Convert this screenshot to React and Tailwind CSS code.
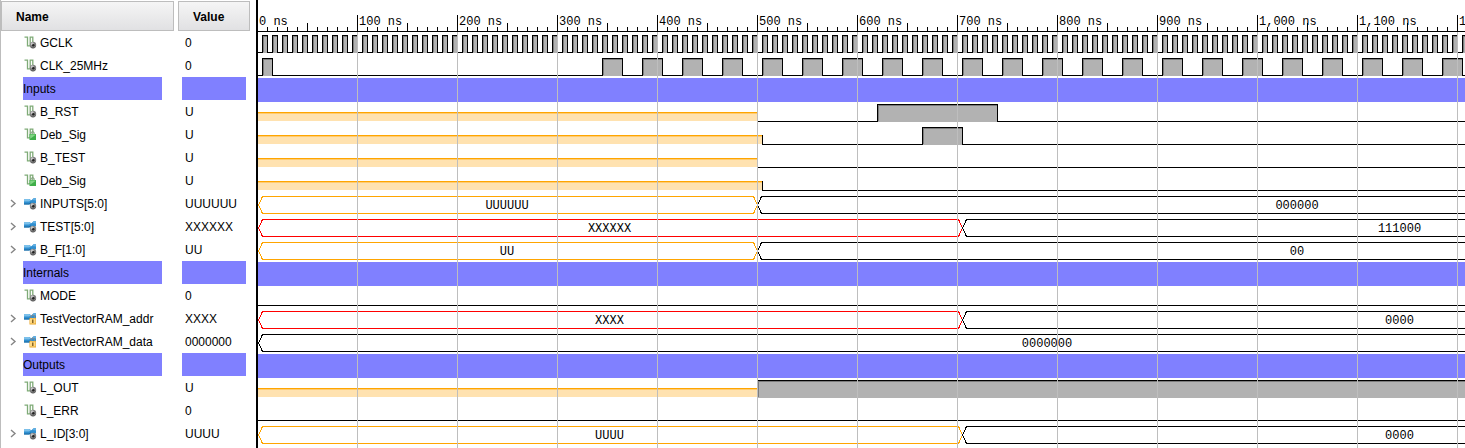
import React, { useLayoutEffect, useRef, useState } from "react";

const END = 1580;
const ROW = 23;
const TOP = 32;

const clock25 = [{ v: "0", t: 0 }, { v: "1", t: 5 }, { v: "0", t: 15 }];
for (let t = 345; t < END; t += 40) {
  clock25.push({ v: "1", t }, { v: "0", t: t + 20 });
}
const gclk = [];
for (let t = 0; t < END; t += 10) {
  gclk.push({ v: "0", t }, { v: "1", t: t + 5 });
}

const signals = [
  { name: "GCLK", value: "0", icon: "port", wave: gclk },
  { name: "CLK_25MHz", value: "0", icon: "port", wave: clock25 },
  { name: "Inputs", divider: true },
  { name: "B_RST", value: "U", icon: "port", wave: [{ v: "U", t: 0 }, { v: "0", t: 500 }, { v: "1", t: 620 }, { v: "0", t: 740 }] },
  { name: "Deb_Sig", value: "U", icon: "internal", wave: [{ v: "U", t: 0 }, { v: "0", t: 505 }, { v: "1", t: 665 }, { v: "0", t: 705 }] },
  { name: "B_TEST", value: "U", icon: "port", wave: [{ v: "U", t: 0 }, { v: "0", t: 500 }] },
  { name: "Deb_Sig", value: "U", icon: "internal", wave: [{ v: "U", t: 0 }, { v: "0", t: 505 }] },
  { name: "INPUTS[5:0]", value: "UUUUUU", icon: "bus", bus: [{ v: "UUUUUU", t: 0 }, { v: "000000", t: 500 }] },
  { name: "TEST[5:0]", value: "XXXXXX", icon: "bus", bus: [{ v: "XXXXXX", t: 0 }, { v: "111000", t: 705 }] },
  { name: "B_F[1:0]", value: "UU", icon: "bus", bus: [{ v: "UU", t: 0 }, { v: "00", t: 500 }] },
  { name: "Internals", divider: true },
  { name: "MODE", value: "0", icon: "port", wave: [{ v: "0", t: 0 }] },
  { name: "TestVectorRAM_addr", value: "XXXX", icon: "locked", bus: [{ v: "XXXX", t: 0 }, { v: "0000", t: 705 }] },
  { name: "TestVectorRAM_data", value: "0000000", icon: "locked", bus: [{ v: "0000000", t: 0 }] },
  { name: "Outputs", divider: true },
  { name: "L_OUT", value: "U", icon: "port", wave: [{ v: "U", t: 0 }, { v: "1", t: 500 }] },
  { name: "L_ERR", value: "0", icon: "port", wave: [{ v: "0", t: 0 }] },
  { name: "L_ID[3:0]", value: "UUUU", icon: "bus", bus: [{ v: "UUUU", t: 0 }, { v: "0000", t: 705 }] },
];

function Knob() {
  return (
    <g>
      <circle cx="9" cy="9" r="3.2" fill="#808080" />
      <circle cx="8.2" cy="7.8" r="1.5" fill="#c4c4c4" />
      <circle cx="9.3" cy="9.2" r="1.2" fill="#222" />
      <path d="M6.6 11a3.2 3.2 0 0 0 5-.4" fill="none" stroke="#4a4a4a" strokeWidth="0.8" />
    </g>
  );
}

function SignalIcon({ kind }) {
  const scalar = kind === "port" || kind === "internal";
  return (
    <svg width="13" height="13" viewBox="0 0 13 13" className="shrink-0" aria-hidden="true">
      {scalar ? (
        <path d="M0.5 1.2H3.5V9.8H6.2V1.2H8.8V6" fill="none" stroke="#7fab77" strokeWidth="1.3" />
      ) : (
        <g>
          <path d="M0 2H5L7.5 3.2L9.5 1.2H12V6.5H8L6 7.4H0Z" fill="#2f8fd0" />
          <path d="M0 2H5L7 3.4L5 4.6H0Z" fill="#7cc0ea" />
          <path d="M8 3L10 1.2H12V3.6Z" fill="#62afe2" />
          <path d="M0 7H5L7 5.8" fill="none" stroke="#176299" strokeWidth="0.9" />
        </g>
      )}
      {(kind === "port" || kind === "bus") && <Knob />}
      {kind === "internal" && (
        <g>
          <path d="M7 6V5.2a1.6 1.6 0 0 1 3.2 0V6" fill="none" stroke="#7d9c79" />
          <rect x="5.5" y="6" width="6.5" height="6" fill="#3fae49" />
          <path d="M6.2 10.8L11.4 7V6.6H6.2Z" fill="#83d585" />
        </g>
      )}
      {kind === "locked" && (
        <g>
          <path d="M6.9 6.2V5a1.9 1.9 0 0 1 3.8 0V6.2" fill="none" stroke="#8c8c8c" />
          <rect x="5.5" y="6" width="6.5" height="6.5" fill="#e9a72c" />
          <rect x="6" y="6.5" width="5.5" height="5" fill="#ffd982" />
          <rect x="8.2" y="7.5" width="1.2" height="3.5" fill="#6b4a10" />
        </g>
      )}
    </svg>
  );
}

function SignalTable() {
  return (
    <table className="w-full table-fixed border-collapse text-left text-xs text-black">
      <colgroup>
        <col className="w-[177px]" />
        <col />
      </colgroup>
      <thead>
        <tr className="h-[31px]">
          <th className="p-0">
            <div className="mt-px mr-1 flex h-[30px] items-center border border-[#bdbdbd] bg-linear-to-b from-[#f5f5f5] to-[#e1e1e3] pt-px pl-3.5">Name</div>
          </th>
          <th className="p-0">
            <div className="mt-px mr-1.5 flex h-[30px] items-center border border-[#bdbdbd] bg-linear-to-b from-[#f5f5f5] to-[#e1e1e3] pt-px pl-3.5">Value</div>
          </th>
        </tr>
      </thead>
      <tbody>
        {signals.map((s, i) =>
          s.divider ? (
            <tr key={i} className="h-[23px]">
              <td className="p-0">
                <div className="mr-4 ml-[22px] flex h-[23px] items-center bg-[#8080ff]">{s.name}</div>
              </td>
              <td className="p-0">
                <div className="mr-2.5 ml-1 h-[23px] bg-[#8080ff]" />
              </td>
            </tr>
          ) : (
            <tr key={i} className="h-[23px]">
              <td className="p-0">
                <div className="flex h-[23px] items-center">
                  <div className="flex w-[23px] shrink-0 items-center pl-2">
                    {s.bus && (
                      <button type="button" aria-label={"Expand " + s.name} className="flex">
                        <svg width="8" height="10" viewBox="0 0 8 10" aria-hidden="true">
                          <path d="M2 1L6 4.5L2 8" fill="none" stroke="#858585" strokeWidth="1.4" />
                        </svg>
                      </button>
                    )}
                  </div>
                  <SignalIcon kind={s.icon} />
                  <span className="pl-[3px] whitespace-nowrap">{s.name}</span>
                </div>
              </td>
              <td className="p-0">
                <div className="flex h-[23px] items-center pl-[7px]">{s.value}</div>
              </td>
            </tr>
          )
        )}
      </tbody>
    </table>
  );
}

// x = 0 of the drawing is one pixel after time zero.
const px = (t) => Math.max(t - 1, 0);

function Digital({ wave, y }) {
  return wave.map((seg, i) => {
    const a = px(seg.t);
    const b = (wave[i + 1] ? wave[i + 1].t : END) - 1;
    const prev = wave[i - 1];
    if (seg.v === "U") {
      return (
        <g key={i}>
          <rect x={a} y={y + 12} width={b - a} height="8" fill="#ffe2b0" />
          <rect x={a} y={y + 12} width={b - a} height="1" fill="#ffcb70" />
          <rect x={a} y={y + 11} width={b - a} height="1" fill="#ffa500" />
        </g>
      );
    }
    if (seg.v === "1") {
      return (
        <g key={i}>
          <rect x={a} y={y + 3} width={b - a} height="18" fill="#b2b2b2" />
          <rect x={a + 1} y={y + 4} width={b - a - 1} height="1" fill="#7c7c7c" />
          <rect x={a + 1} y={y + 4} width="1" height="16" fill="#7c7c7c" />
          <rect x={a} y={y + 3} width={b - a} height="1" fill="#000" />
          <rect x={a} y={y + 3} width="1" height="18" fill="#000" />
        </g>
      );
    }
    return (
      <g key={i}>
        <rect x={a} y={y + 20} width={b - a} height="1" fill="#000" />
        {prev && <rect x={a} y={prev.v === "U" ? y + 11 : y + 3} width="1" height={prev.v === "U" ? 10 : 18} fill="#000" />}
      </g>
    );
  });
}

function Bus({ bus, y }) {
  return bus.map((seg, i) => {
    const next = bus[i + 1];
    const a = px(seg.t) + 0.5;
    const b = (next ? next.t : END) - 0.5;
    const color = seg.v[0] === "U" ? "#ffa500" : seg.v[0] === "X" ? "#ff0000" : "#000";
    const mid = y + 12;
    return (
      <g key={i}>
        <path
          d={`M${a} ${mid}L${a + 4} ${y + 3.5}H${b - 4}L${b} ${mid}L${b - 4} ${y + 20.5}H${a + 4}Z`}
          fill="none"
          stroke={color}
          shapeRendering="crispEdges"
        />
        <text x={(seg.t + (next ? next.t : END)) / 2 - 1} y={y + 16} textAnchor="middle">
          {seg.v}
        </text>
      </g>
    );
  });
}

function Waveforms() {
  const ref = useRef(null);
  const [visible, setVisible] = useState(END);

  useLayoutEffect(() => {
    const measure = () => setVisible(Math.min(END, ref.current.getBoundingClientRect().width));
    measure();
    window.addEventListener("resize", measure);
    return () => window.removeEventListener("resize", measure);
  }, []);

  const ticks = [];
  for (let t = 0; t <= visible; t += 10) ticks.push(t);
  const majors = ticks.filter((t) => t % 100 === 0);
  const height = TOP + signals.length * ROW + 2;
  return (
    <svg
      ref={ref}
      width="100%"
      height={height}
      className="block [font-family:'Liberation_Mono','Courier_New',monospace] text-xs"
      role="img"
      aria-label="Waveforms"
    >
      {signals.map((s, i) => {
        const y = TOP + i * ROW;
        if (s.divider) return <rect key={i} x="0" y={y} width={END} height="24" fill="#8080ff" />;
        return s.bus ? <Bus key={i} bus={s.bus} y={y} /> : <Digital key={i} wave={s.wave} y={y} />;
      })}
      {majors.slice(1).map((t) => (
        <rect key={t} x={t - 1} y={TOP} width="1" height={height - TOP} fill="#bebebe" />
      ))}
      <rect x="0" y="31" width={END} height="1" fill="#000" />
      {ticks.slice(1).map((t) => {
        const h = t % 100 === 0 ? 17 : t % 50 === 0 ? 9 : 5;
        return <rect key={t} x={t - 1} y={TOP - h} width="1" height={h} fill="#000" />;
      })}
      {majors.map((t) => (
        <text key={t} x={t + 1} y="25">
          {`${t.toLocaleString("en-US")} ns`}
        </text>
      ))}
    </svg>
  );
}

export default function App() {
  return (
    <main className="flex min-h-screen overflow-hidden bg-white [font-family:'Liberation_Sans',Arial,sans-serif]">
      <section className="w-64 shrink-0 border-l border-[#bdbdbd]">
        <SignalTable />
      </section>
      <section className="min-w-0 flex-1 overflow-hidden border-l-2 border-black">
        <Waveforms />
      </section>
    </main>
  );
}
